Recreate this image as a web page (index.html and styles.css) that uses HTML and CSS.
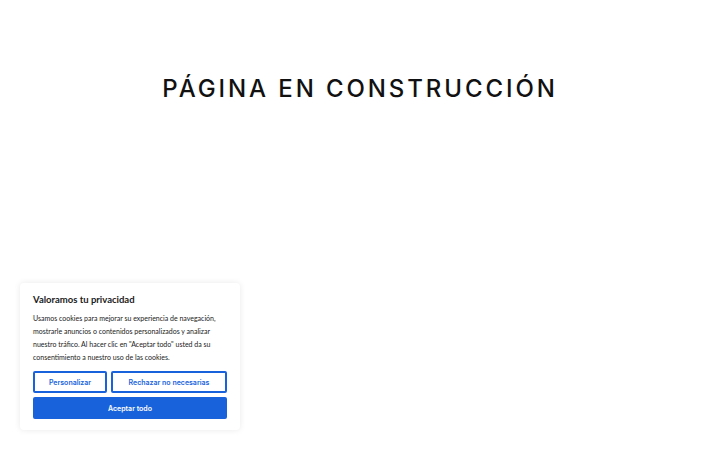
FILE: index.html
```html
<!DOCTYPE html>
<html lang="es">
<head>
<meta charset="utf-8">
<title>Página en construcción</title>
<link rel="stylesheet" href="styles.css">
</head>
<body>
<main class="page">
  <h1 class="title">PÁGINA EN CONSTRUCCIÓN</h1>
</main>
<aside class="consent">
  <p class="consent-title">Valoramos tu privacidad</p>
  <p class="consent-text">Usamos cookies para mejorar su experiencia de navegación, mostrarle anuncios o contenidos personalizados y analizar nuestro tráfico. Al hacer clic en "Aceptar todo" usted da su consentimiento a nuestro uso de las cookies.</p>
  <div class="consent-row">
    <button class="btn btn-outline btn-custom">Personalizar</button>
    <button class="btn btn-outline btn-reject">Rechazar no necesarias</button>
  </div>
  <button class="btn btn-fill">Aceptar todo</button>
</aside>
</body>
</html>
```
FILE: styles.css
```css
html, body {
  margin: 0;
  padding: 0;
  background: #ffffff;
  width: 720px;
  height: 450px;
  overflow: hidden;
}
.page {
  padding-top: 74px;
  text-align: center;
}
.title {
  margin: 0;
  font-family: "Inter", "DejaVu Sans", sans-serif;
  font-weight: 500;
  font-size: 24px;
  letter-spacing: 2.9px;
  color: #111111;
  line-height: 30px;
}
.consent {
  position: absolute;
  left: 20px;
  top: 283px;
  width: 220px;
  height: 147px;
  box-sizing: border-box;
  padding: 10px 13px 0 13px;
  background: #ffffff;
  border-radius: 4px;
  box-shadow: 0 0 6px rgba(0, 0, 0, 0.09);
  font-family: "Lato", "Liberation Sans", sans-serif;
}
.consent-title {
  margin: 0 0 5px 0;
  font-size: 9.5px;
  font-weight: 700;
  color: #212121;
  line-height: 14px;
}
.consent-text {
  margin: 0 0 7px 0;
  font-size: 7px;
  line-height: 13px;
  color: #212121;
}
.consent-row {
  display: flex;
  gap: 4px;
  margin-bottom: 4px;
}
.btn {
  box-sizing: border-box;
  height: 22px;
  font-family: "Inter", "DejaVu Sans", sans-serif;
  font-size: 7px;
  font-weight: 600;
  border-radius: 2px;
  padding: 0;
}
.btn-outline {
  background: #ffffff;
  border: 2px solid #1863dc;
  color: #1863dc;
}
.btn-custom { width: 74px; }
.btn-reject { flex: 1; }
.btn-fill {
  display: block;
  width: 100%;
  background: #1863dc;
  border: 2px solid #1863dc;
  color: #ffffff;
}
```
